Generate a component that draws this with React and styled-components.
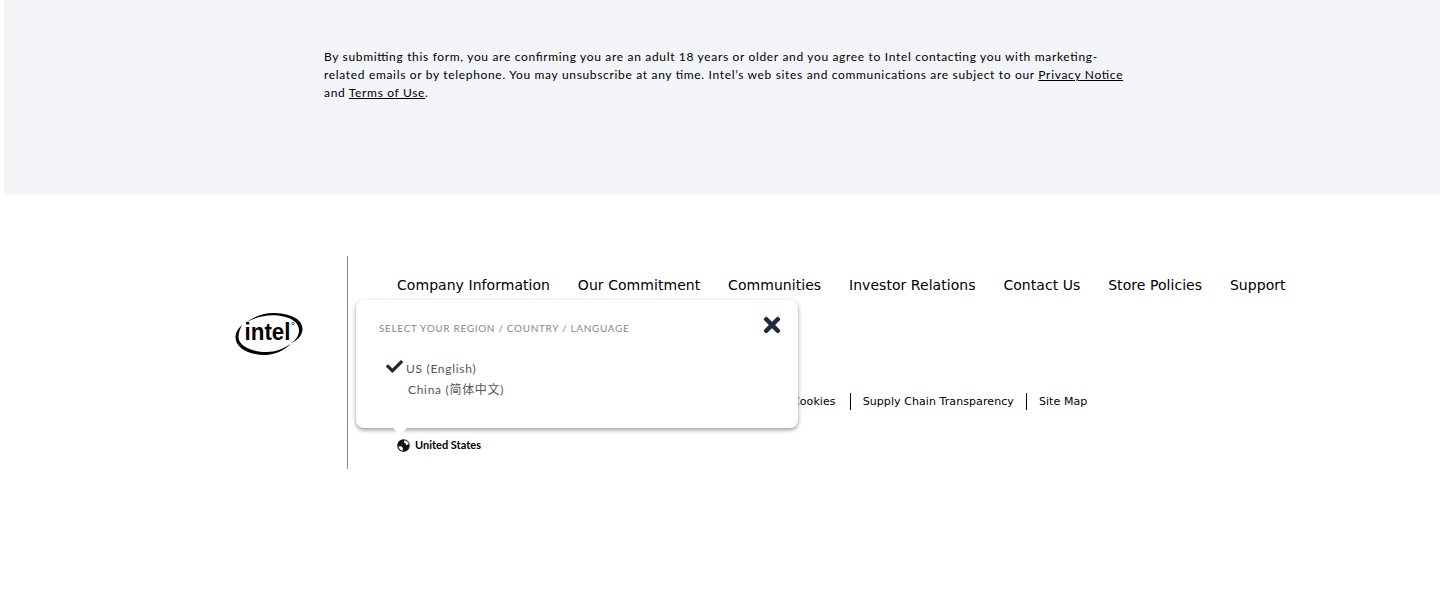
import React from 'react';
import styled, { createGlobalStyle } from 'styled-components';
import { FaCheck, FaTimes } from 'react-icons/fa';

const mainLinks = [
  'Company Information',
  'Our Commitment',
  'Communities',
  'Investor Relations',
  'Contact Us',
  'Store Policies',
  'Support',
];

const legalLinks = ['Cookies', 'Supply Chain Transparency', 'Site Map'];

const App = () => (
  <>
    <GlobalStyle />
    <Disclaimer>
      <DisclaimerText>
        By submitting this form, you are confirming you are an adult 18 years or older and you agree to Intel
        contacting you with marketing-related emails or by telephone. You may unsubscribe at any time. Intel’s web
        sites and communications are subject to our <a href="#privacy">Privacy Notice</a> and{' '}
        <a href="#terms">Terms of Use</a>.
      </DisclaimerText>
    </Disclaimer>
    <Footer>
      <LogoColumn>
        <Logo viewBox="0 0 85 60" role="img" aria-label="Intel">
          <path d="M17 20C12.500 24 10.500 28 10.500 32C10.500 43 24 50 40 50C50 50 60 45 66 38.500C59 43.500 50 47 42 47C27 47 13.500 41 13.500 32C13.500 28 15 24 17 20z" />
          <path d="M21 17.500C28 12 38 8 48 8C63 8 77.500 13 77.500 24C77.500 30 73 35 66 38.500C70.500 35 74 31 74 25C74 15 60 10.300 48 10.300C38 10.300 29 13 21 17.500z" />
          <LogoText x="19.500" y="34.500" textLength="46" lengthAdjust="spacingAndGlyphs">intel</LogoText>
          <circle cx="68" cy="18.500" r="1.200" fill="none" stroke="#000" strokeWidth=".6" />
        </Logo>
      </LogoColumn>
      <LinksColumn>
        <MainNav>
          {mainLinks.map((link) => (
            <MainLink key={link} href="#main">{link}</MainLink>
          ))}
        </MainNav>
        <LegalNav>
          {legalLinks.map((link) => (
            <LegalLink key={link} href="#legal">{link}</LegalLink>
          ))}
        </LegalNav>
        <RegionRow>
          <GlobeIcon viewBox="0 0 13 13" aria-hidden="true">
            <circle cx="6.500" cy="6.500" r="6.300" fill="#111" />
            <path d="M7.500 1.200c2 .3 3.700 1.700 4.300 3.800L9.300 6.300 8.600 4.600 7 3.600z" fill="#fff" />
            <path d="M1.400 7.600l2.800-.3 1.900 2-.8 2.600C3.500 11.500 1.900 9.800 1.400 7.600z" fill="#fff" />
          </GlobeIcon>
          <span>United States</span>
        </RegionRow>
        <RegionPopup>
          <PopupTitle>Select your region / country / language</PopupTitle>
          <CloseButton aria-label="Close">
            <FaTimes size={24} />
          </CloseButton>
          <RegionOption $selected>
            <FaCheck size={17} />
            US (English)
          </RegionOption>
          <RegionOption>China (简体中文)</RegionOption>
        </RegionPopup>
      </LinksColumn>
    </Footer>
  </>
);

export default App;

const GlobalStyle = createGlobalStyle`
  html, body {
    margin: 0;
    padding: 0;
    background: #fff;
  }

  body {
    font-family: Lato, "Noto Sans CJK SC", sans-serif;
    overflow: hidden;
  }
`;

const Disclaimer = styled.section`
  height: 195px;
  margin-left: 4px;
  padding: 48px 0 0 320px;
  box-sizing: border-box;
  background: #f3f5f9;
`;

const DisclaimerText = styled.p`
  width: 804px;
  margin: 0;
  font-size: 12px;
  line-height: 18px;
  letter-spacing: 0.67px;
  color: #000;
  font-feature-settings: "liga" 1;

  a {
    color: #000;
  }
`;

const Footer = styled.footer`
  display: flex;
  margin-top: 61px;
`;

const LogoColumn = styled.div`
  width: 347px;
  padding: 49px 0 0 225px;
  box-sizing: border-box;
`;

const Logo = styled.svg`
  display: block;
  width: 85px;
  height: 60px;
`;

const LogoText = styled.text`
  font-family: "Liberation Sans", Arial, sans-serif;
  font-size: 23px;
  font-weight: 700;
  fill: #000;
`;

const LinksColumn = styled.div`
  position: relative;
  width: 1000px;
  height: 213px;
  padding: 20px 0 0 49px;
  box-sizing: border-box;
  border-left: 1px solid #8a8a8a;
`;

const MainNav = styled.nav`
  display: flex;
  gap: 27.8px;
`;

const MainLink = styled.a`
  font-family: Verdana, "DejaVu Sans", sans-serif;
  font-size: 14px;
  line-height: 18px;
  letter-spacing: 0.05px;
  color: #000;
  text-decoration: none;
  white-space: nowrap;
`;

const LegalNav = styled.nav`
  display: flex;
  margin-top: 99px;
  padding-left: 395px;
`;

const LegalLink = styled.a`
  padding: 0 12px;
  border-left: 1px solid #000;
  font-family: Verdana, "DejaVu Sans", sans-serif;
  font-size: 11px;
  line-height: 17px;
  letter-spacing: 0.08px;
  color: #000;
  text-decoration: none;
  white-space: nowrap;

  &:first-child {
    padding: 0 14px 0 0;
    border-left: 0;
  }
`;

const RegionRow = styled.div`
  display: flex;
  align-items: center;
  gap: 5px;
  margin-top: 28px;
  font-size: 11px;
  font-weight: 700;
  line-height: 14px;
  color: #000;
`;

const GlobeIcon = styled.svg`
  display: block;
  width: 13px;
  height: 13px;
`;

const RegionPopup = styled.div`
  position: absolute;
  top: 44px;
  left: 8px;
  width: 442px;
  height: 128px;
  padding: 22px 23px;
  box-sizing: border-box;
  background: #fff;
  border-radius: 8px;
  box-shadow: 0 2px 4px rgba(0, 0, 0, 0.4);

  &::after {
    content: '';
    position: absolute;
    left: 37px;
    bottom: -7px;
    border-top: 7px solid #fff;
    border-left: 7px solid transparent;
    border-right: 7px solid transparent;
  }
`;

const PopupTitle = styled.div`
  font-size: 10px;
  line-height: 12px;
  letter-spacing: 0.67px;
  text-transform: uppercase;
  color: #888;
`;

const CloseButton = styled.button`
  position: absolute;
  top: 13px;
  right: 14px;
  display: flex;
  padding: 0;
  border: 0;
  background: none;
  color: #1f2a3a;
`;

const RegionOption = styled.div`
  position: relative;
  margin-left: ${(p) => (p.$selected ? '27px' : '29px')};
  margin-top: ${(p) => (p.$selected ? '24px' : '0')};
  font-size: 12px;
  line-height: 21px;
  letter-spacing: 0.7px;
  color: #555;

  svg {
    position: absolute;
    left: -20px;
    top: 0;
    color: #1f2a3a;
  }
`;
